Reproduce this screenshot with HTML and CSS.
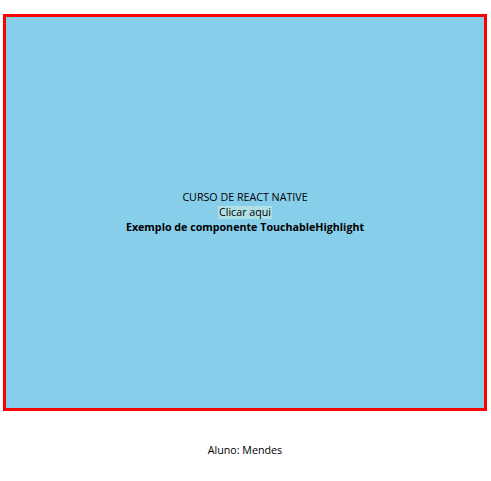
FILE: index.html
```html
<!DOCTYPE html>
<html>
<head>
<meta charset="utf-8">
<link rel="stylesheet" href="styles.css">
</head>
<body>
<div class="page">
  <div class="box">
    <div class="title">CURSO DE REACT NATIVE</div>
    <div class="btn">Clicar aqui</div>
    <div class="sub">Exemplo de componente TouchableHighlight</div>
  </div>
  <div class="footer">Aluno: Mendes</div>
</div>
</body>
</html>
```
FILE: styles.css
```css
html, body { margin: 0; padding: 0; background: #fff; }
body { font-family: "Open Sans", "Noto Sans", sans-serif; font-size: 10.7px; color: #000; }
.page { padding: 14px 4px 0 3px; }
.box {
  width: 478px;
  height: 391px;
  border: 3px solid #ff0000;
  background: #87ceeb;
  display: flex;
  flex-direction: column;
  align-items: center;
  justify-content: center;
  line-height: 15px;
}
.btn { background: #b0e0e6; padding: 0 1px; line-height: 13px; margin: 1px 0; }
.sub { font-weight: bold; }
.footer { text-align: center; margin-top: 32px; line-height: 15px; }
```
